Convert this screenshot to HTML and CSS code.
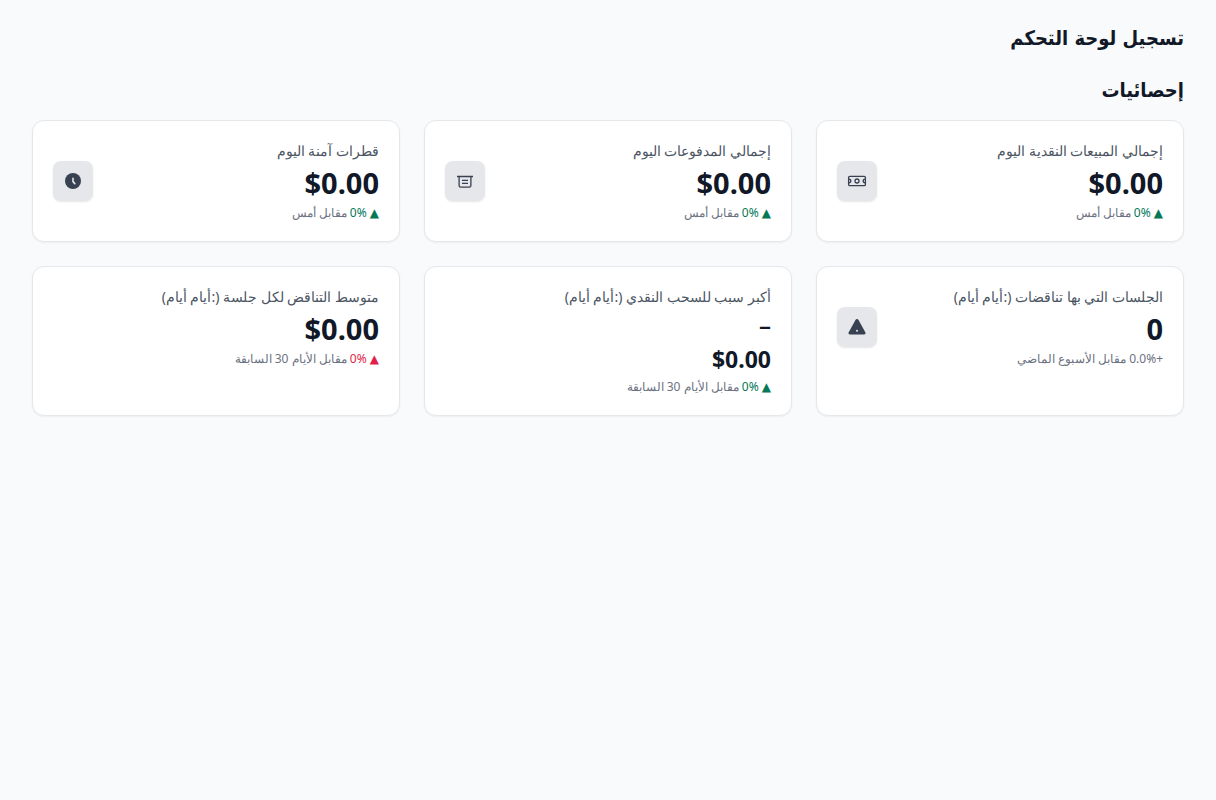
FILE: index.html
```html
<!DOCTYPE html>
<html lang="ar" dir="rtl">
<head>
    <meta charset="UTF-8">
    <meta name="viewport" content="width=device-width, initial-scale=1.0">
    <title>تسجيل لوحة التحكم</title>
    <link rel="stylesheet" href="styles.css">
</head>
<body>
    <main class="dashboard">
        <h1>تسجيل لوحة التحكم</h1>
        <h2>إحصائيات</h2>

        <div class="stats">
            <!-- Today -->
            <section class="card">
                <div class="card-text">
                    <div class="label">إجمالي المبيعات النقدية اليوم</div>
                    <div class="value">$0.00</div>
                    <div class="trend"><span class="up"><span class="arrow">▲</span> 0%</span> مقابل أمس</div>
                </div>
                <div class="icon">
                    <svg viewBox="0 0 20 20" fill="none" stroke="currentColor" stroke-width="1.3">
                        <rect x="1.6" y="5.4" width="16.8" height="9.2" rx="1.2"/>
                        <circle cx="10" cy="10" r="2"/>
                        <path d="M1.8 8.2c1.5 0 2 .6 2 1.8s-.5 1.8-2 1.8M18.2 8.2c-1.5 0-2 .6-2 1.8s.5 1.8 2 1.8"/>
                    </svg>
                </div>
            </section>
            <section class="card">
                <div class="card-text">
                    <div class="label">إجمالي المدفوعات اليوم</div>
                    <div class="value">$0.00</div>
                    <div class="trend"><span class="up"><span class="arrow">▲</span> 0%</span> مقابل أمس</div>
                </div>
                <div class="icon">
                    <svg viewBox="0 0 20 20" fill="none" stroke="currentColor" stroke-width="1.3">
                        <path d="M2 5.5h16M4.1 5.5v9a1.6 1.6 0 0 0 1.6 1.6h8.6a1.6 1.6 0 0 0 1.6-1.6v-9M7 9.4h6M7 12.4h6"/>
                    </svg>
                </div>
            </section>
            <section class="card">
                <div class="card-text">
                    <div class="label">قطرات آمنة اليوم</div>
                    <div class="value">$0.00</div>
                    <div class="trend"><span class="up"><span class="arrow">▲</span> 0%</span> مقابل أمس</div>
                </div>
                <div class="icon">
                    <svg viewBox="0 0 20 20">
                        <circle cx="10" cy="10" r="8" fill="currentColor"/>
                        <path d="M10 7.2v3.4l1.8 2" fill="none" stroke="#e5e7eb" stroke-width="1.6" stroke-linecap="round"/>
                    </svg>
                </div>
            </section>

            <!-- Discrepancies -->
            <section class="card">
                <div class="card-text">
                    <div class="label">الجلسات التي بها تناقضات (:أيام أيام)</div>
                    <div class="value">0</div>
                    <div class="trend">+0.0% مقابل الأسبوع الماضي</div>
                </div>
                <div class="icon">
                    <svg viewBox="0 0 20 20">
                        <path d="M8.6 2.8a1.6 1.6 0 0 1 2.8 0l7 12.6a1.5 1.5 0 0 1-1.3 2.2H2.9a1.5 1.5 0 0 1-1.3-2.2z" fill="currentColor"/>
                        <circle cx="10" cy="13.8" r="1" fill="#e5e7eb"/>
                    </svg>
                </div>
            </section>
            <section class="card">
                <div class="card-text">
                    <div class="label">أكبر سبب للسحب النقدي (:أيام أيام)</div>
                    <div class="reason">–</div>
                    <div class="amount">$0.00</div>
                    <div class="trend"><span class="up"><span class="arrow">▲</span> 0%</span> مقابل الأيام 30 السابقة</div>
                </div>
            </section>
            <section class="card">
                <div class="card-text">
                    <div class="label">متوسط التناقض لكل جلسة (:أيام أيام)</div>
                    <div class="value">$0.00</div>
                    <div class="trend"><span class="down"><span class="arrow">▲</span> 0%</span> مقابل الأيام 30 السابقة</div>
                </div>
            </section>
        </div>
    </main>
</body>
</html>
```
FILE: styles.css
```css
* {
    box-sizing: border-box;
}
body {
    margin: 0;
    background-color: #f9fafb;
    color: #111827;
    font-family: "Noto Sans", sans-serif;
}
.dashboard {
    padding: 24px 32px;
}
h1, h2 {
    margin: 0;
    font-family: "DejaVu Sans Condensed", "DejaVu Sans", sans-serif;
    font-size: 20px;
    line-height: 28px;
    font-weight: 600;
}
h1 {
    margin-bottom: 24px;
}
h2 {
    margin-bottom: 16px;
}
.stats {
    display: grid;
    grid-template-columns: repeat(3, 1fr);
    gap: 24px;
}
.card {
    display: flex;
    justify-content: space-between;
    align-items: flex-start;
    padding: 20px;
    background-color: white;
    border: 1px solid #e5e7eb;
    border-radius: 12px;
    box-shadow: 0 1px 2px rgba(0,0,0,0.05);
}
.label {
    font-size: 14px;
    line-height: 20px;
    color: #4b5563;
}
.value {
    margin-top: 4px;
    font-size: 29px;
    line-height: 36px;
    font-weight: 700;
}
.reason {
    margin-top: 4px;
    font-size: 24px;
    line-height: 28px;
    font-weight: 600;
}
.amount {
    margin-top: 4px;
    font-size: 23px;
    line-height: 32px;
    font-weight: 700;
}
.trend {
    margin-top: 4px;
    font-size: 12px;
    line-height: 16px;
    color: #6b7280;
}
.arrow {
    font-family: "DejaVu Sans", sans-serif;
}
.up {
    color: #047857;
}
.down {
    color: #e11d48;
}
.icon {
    display: flex;
    align-items: center;
    justify-content: center;
    width: 40px;
    height: 40px;
    margin-top: 20px;
    border-radius: 8px;
    background-color: #e5e7eb;
    color: #374151;
    box-shadow: 0 1px 2px rgba(0,0,0,0.1);
}
.icon svg {
    width: 20px;
    height: 20px;
}
```
